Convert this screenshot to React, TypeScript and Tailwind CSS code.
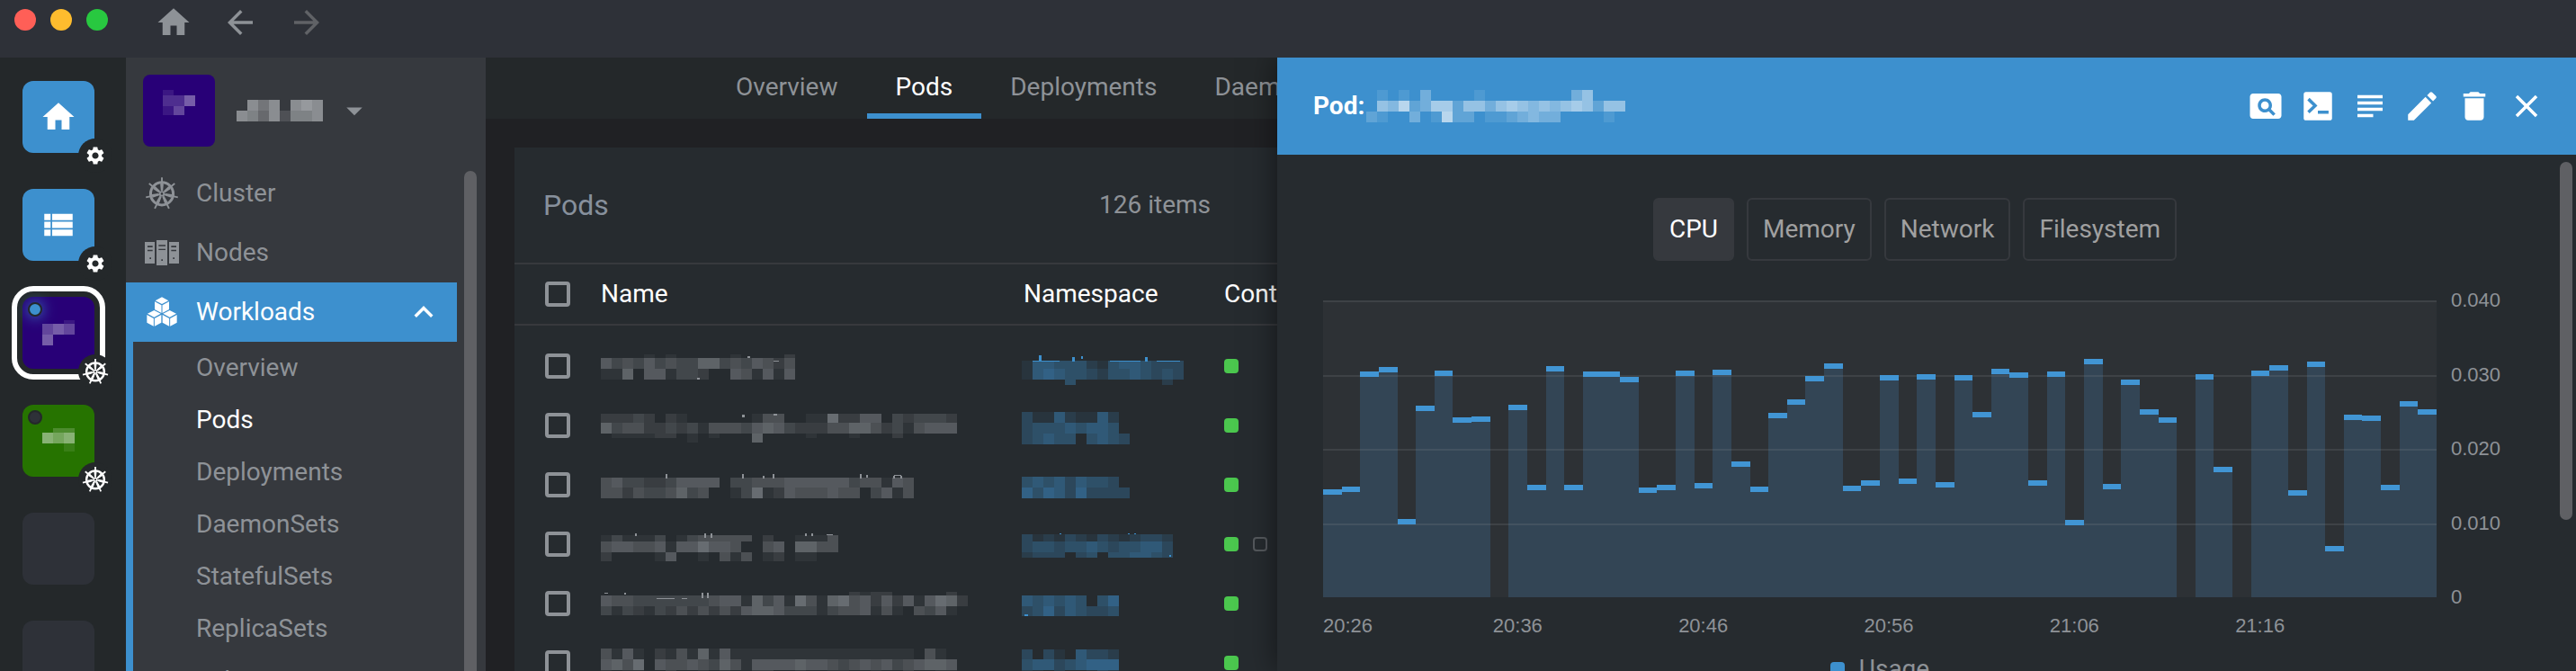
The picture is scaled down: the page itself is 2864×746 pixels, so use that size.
import type { ReactNode } from "react";
import {
  MdArrowBack,
  MdArrowDropDown,
  MdArrowForward,
  MdClose,
  MdDelete,
  MdEdit,
  MdHome,
  MdKeyboardArrowUp,
  MdPageview,
  MdSettings,
  MdSubject,
} from "react-icons/md";

// [top, height, one digit per 12px cell: 0-9 = strength, "." = empty]
type MosaicRow = [number, number, string];
// small strokes that stick out of a masked text: [x, y, width, height]
type Speck = [number, number, number, number];

type Pod = {
  name: MosaicRow[];
  nameSpecks?: Speck[];
  namespace: MosaicRow[];
  namespaceSpecks?: Speck[];
  waiting?: boolean;
};

const pods: Pod[] = [
  {
    name: [
      [20, 4, "....1.1.....1....2"],
      [24, 12, "534353433663435424"],
      [36, 12, "116.551332..541515"],
    ],
    nameSpecks: [[163, 22, 3, 2], [192, 27, 6, 1], [107, 46, 3, 2]],
    namespace: [
      [27, 9, "155444214554333"],
      [36, 12, "156544324454343"],
      [48, 6, "....4........2."],
    ],
    namespaceSpecks: [[19, 21, 3, 7], [56, 23, 3, 5], [66, 22, 2, 3], [137, 23, 3, 5], [12, 27, 30, 1], [98, 27, 34, 1], [150, 27, 26, 1]],
  },
  {
    name: [
      [20, 10, "22232.21......144..1172255.323332"],
      [30, 12, "634422323144435653222446642314555"],
      [42, 5, ".111122.1.1...6....1...1...2....."],
      [47, 5, "........1.....6.................."],
    ],
    nameSpecks: [[157, 21, 3, 3], [192, 20, 4, 2]],
    namespace: [
      [18, 12, "311521152."],
      [30, 12, "344454554."],
      [42, 12, "34544.4543"],
    ],
  },
  {
    name: [
      [25, 11, "45332235555.33444555555344154"],
      [36, 12, "4424334634..137125444544.3514"],
    ],
    nameSpecks: [[72, 21, 2, 5], [157, 21, 2, 5], [180, 23, 2, 3], [191, 21, 2, 5], [288, 21, 2, 5], [295, 22, 2, 3], [326, 22, 8, 1], [325, 23, 2, 3], [333, 23, 2, 3]],
    namespace: [
      [24, 12, "454535443."],
      [36, 12, "6465363333"],
    ],
  },
  {
    name: [
      [23, 7, "131113.1344444.2..1114"],
      [30, 12, "4554451557554..45.6644"],
      [42, 10, "2....15..1.414.12.11.."],
    ],
    nameSpecks: [[38, 21, 2, 3], [115, 21, 2, 5], [122, 21, 2, 5], [227, 21, 2, 3], [234, 21, 2, 3], [251, 22, 7, 1]],
    namespace: [
      [22, 8, "31213213212332"],
      [30, 12, "34434454344553"],
      [42, 6, "2333.34.445543"],
    ],
    namespaceSpecks: [[42, 21, 2, 1], [118, 21, 2, 1], [125, 21, 2, 1], [164, 45, 2, 2]],
    waiting: true,
  },
  {
    name: [
      [20, 4, ".......................2122.....2."],
      [24, 12, "5443333333455163517416745252515762"],
      [36, 10, "3132132424242566533313445141.4351."],
    ],
    nameSpecks: [[4, 21, 4, 1], [26, 21, 2, 2], [62, 27, 20, 1], [90, 27, 6, 1], [112, 21, 2, 6], [118, 21, 2, 6]],
    namespace: [
      [24, 12, "545454.46"],
      [36, 11, "346354334"],
    ],
    namespaceSpecks: [[3, 45, 4, 2]],
  },
  {
    name: [
      [17, 12, "4151.214161511111111111111111.41."],
      [29, 12, "5647.5445436415555655434545345665"],
      [41, 8, "1.11..2..1.1..22..1..11..1..2..11"],
    ],
    namespace: [
      [18, 11, "3.31.5332"],
      [29, 12, "455345666"],
      [41, 8, "21.2..132"],
    ],
  },
];

// CPU usage per minute in millicores, null where no sample came in
const usage: (number | null)[] = [
  14.5, 14.9, 30.4, 31, 10.6, 25.8, 30.6, 24.3, 24.4, null,
  25.9, 15.2, 31.2, 15.2, 30.4, 30.4, 29.7, 14.8, 15.2, 30.5,
  15.4, 30.7, 18.3, 14.9, 24.9, 26.7, 29.8, 31.5, 15, 15.8,
  29.9, 16, 30.1, 15.5, 29.9, 25, 30.8, 30.3, 15.8, 30.4,
  10.4, 32.1, 15.3, 29.3, 25.3, 24.3, null, 30.1, 17.6, null,
  30.5, 31.3, 14.4, 31.8, 6.9, 24.6, 24.5, 15.2, 26.4, 25.3,
];

const yLabels = ["0.040", "0.030", "0.020", "0.010", "0"];
const xLabels = ["20:26", "20:36", "20:46", "20:56", "21:06", "21:16"];

const workloads = [
  "Overview",
  "Pods",
  "Deployments",
  "DaemonSets",
  "StatefulSets",
  "ReplicaSets",
  "Jobs",
];

function Mosaic({ rows, color, height, specks = [], speckColor = "#8e9297" }: {
  rows: MosaicRow[];
  color: string;
  height: number;
  specks?: Speck[];
  speckColor?: string;
}) {
  const width = Math.max(...rows.map((r) => r[2].length)) * 12;
  return (
    <svg width={width} height={height} className="block shrink-0" shapeRendering="crispEdges" aria-hidden="true">
      {rows.map(([y, h, cells]) =>
        cells.split("").map((c, i) =>
          c === "." ? null : (
            <rect key={`${y}-${i}`} x={i * 12} y={y} width={12} height={h} fill={color} opacity={Number(c) / 11} />
          )
        )
      )}
      {specks.map(([x, y, w, h], i) => (
        <rect key={i} x={x} y={y} width={w} height={h} fill={speckColor} />
      ))}
    </svg>
  );
}

function WheelIcon({ className, thin }: { className?: string; thin?: boolean }) {
  const w = thin ? 6 : 5;
  return (
    <svg viewBox="0 0 100 100" className={className} fill="none" stroke="currentColor" aria-hidden="true">
      <circle cx="50" cy="51" r="33" strokeWidth={8} />
      <circle cx="50" cy="51" r="6" strokeWidth={5} />
      {[0, 1, 2, 3, 4, 5, 6].map((i) => (
        <g key={i} transform={`rotate(${(i * 360) / 7} 50 51)`}>
          <path d="M50 42V3" strokeWidth={w} />
          <path d="M47 42L45 22h10l-2 20z" fill="currentColor" stroke="none" />
        </g>
      ))}
    </svg>
  );
}

function NodesIcon() {
  return (
    <svg viewBox="0 0 114 84" className="w-[38px]" fill="currentColor" aria-hidden="true">
      <path d="M0 6h33v72H0zM39 0h36v84H39zM81 6h33v72H81z" />
      <path
        className="fill-[#36393e]"
        d="M9 19h17v5H9zM9 32h17v5H9zM16 58h5v5h-5zM46 16h23v4H46zM46 29h23v4H46zM55 64h5v5h-5zM88 19h17v5H88zM88 32h17v5H88zM94 58h5v5h-5z"
      />
    </svg>
  );
}

function CubesIcon() {
  return (
    <svg viewBox="0 0 102 100" className="w-[34px]" fill="currentColor" aria-hidden="true">
      {[[51, 1], [25, 45], [77, 45]].map(([x, y]) => (
        <path
          key={x}
          transform={`translate(${x} ${y})`}
          d="M0 0l22 11.5L0 23l-22-11.5zM-24 15l22.5 12v26L-24 41zM24 15L1.500 27v26L24 41z"
        />
      ))}
    </svg>
  );
}

function ListIcon() {
  return (
    <svg viewBox="0 0 24 24" className="size-[42px]" fill="currentColor" aria-hidden="true">
      <path d="M3 14h4v-4H3v4zm0 5h4v-4H3v4zM3 9h4V5H3v4zm5 5h13v-4H8v4zm0 5h13v-4H8v4zM8 5v4h13V5H8z" />
    </svg>
  );
}

function TerminalIcon() {
  return (
    <svg viewBox="0 0 24 24" className="size-[42px]" aria-hidden="true">
      <rect x="3" y="3" width="18" height="18" rx="1.500" fill="currentColor" />
      <path d="M6 7.500l4.300 4.200L6 15.900M12 15.900h6.800" fill="none" stroke="#3d90ce" strokeWidth="2" />
    </svg>
  );
}

function HotbarItem({ label, className, badge, status, active, children }: {
  label: string;
  className: string;
  badge?: ReactNode;
  status?: string;
  active?: boolean;
  children?: ReactNode;
}) {
  return (
    <button
      aria-label={label}
      className={`relative flex size-20 shrink-0 items-center justify-center rounded-xl text-white ${className} ${
        active ? "outline-6 outline-offset-6 outline-white" : ""
      }`}
    >
      {children}
      {status && <span className={`absolute top-1.5 left-1.5 size-4 rounded-full border-2 border-[#24282a] ${status}`} />}
      {badge && (
        <span className="absolute -right-5 -bottom-[22px] flex size-[38px] items-center justify-center rounded-full bg-[#24282a]">
          {badge}
        </span>
      )}
    </button>
  );
}

function Hotbar() {
  return (
    <aside className="flex w-[140px] shrink-0 flex-col items-start gap-10 overflow-hidden bg-[#24282a] pt-[26px] pl-[25px]">
      <HotbarItem label="Home" className="bg-[#3d90ce]" badge={<MdSettings className="size-6" />}>
        <MdHome className="size-[42px]" />
      </HotbarItem>
      <HotbarItem label="Catalog" className="bg-[#3d90ce]" badge={<MdSettings className="size-6" />}>
        <ListIcon />
      </HotbarItem>
      <HotbarItem
        label="Current cluster"
        className="bg-[#280077]"
        active
        status="bg-[#3d90ce] shadow-[0_0_16px_#3d90ce]"
        badge={<WheelIcon className="size-[30px]" thin />}
      >
        <Mosaic rows={[[0, 4, "..1"], [4, 12, "343"], [16, 12, "4.."]]} color="#ffffff" height={28} />
      </HotbarItem>
      <HotbarItem
        label="Other cluster"
        className="bg-[#267300]"
        status="bg-[#2e3138]"
        badge={<WheelIcon className="size-[30px]" thin />}
      >
        <Mosaic rows={[[0, 5, ".22"], [5, 12, "545"], [17, 9, "..1"]]} color="#ffffff" height={28} />
      </HotbarItem>
      <HotbarItem label="Empty slot" className="bg-[#2e3138]" />
      <HotbarItem label="Empty slot" className="bg-[#2e3138]" />
    </aside>
  );
}

function Sidebar() {
  const row = "flex h-[66px] items-center gap-[18px] pl-5";
  const icon = "flex w-10 shrink-0 justify-center";

  return (
    <aside className="flex w-[400px] shrink-0 flex-col bg-[#36393e]">
      <button className="flex h-[118px] shrink-0 items-center pl-[19px]" aria-label="Select cluster">
        <span className="mr-6 flex size-20 items-center justify-center rounded-lg bg-[#280077]">
          <Mosaic rows={[[0, 6, "1.."], [6, 12, "224"], [18, 10, "13."]]} color="#ffffff" height={46} />
        </span>
        <Mosaic rows={[[0, 12, ".757.787"], [12, 12, "76472667"], [24, 4, "...11..6"]]} color="#bcbec1" height={24} />
        <MdArrowDropDown className="ml-3.5 size-[42px]" />
      </button>

      <div className="flex min-h-0 flex-1">
        <nav className="flex-1 overflow-hidden">
          <a href="#cluster" className={row}>
            <span className={icon}><WheelIcon className="size-[38px]" /></span>
            Cluster
          </a>
          <a href="#nodes" className={row}>
            <span className={icon}><NodesIcon /></span>
            Nodes
          </a>
          <a href="#workloads" className={`${row} bg-[#3d90ce] text-white`}>
            <span className={icon}><CubesIcon /></span>
            Workloads
            <MdKeyboardArrowUp className="mr-4 ml-auto size-[42px]" />
          </a>
          <ul className="border-l-8 border-[#3d90ce]">
            {workloads.map((item) => (
              <li key={item}>
                <a href={`#${item}`} className={`flex h-[58px] items-center pl-[70px] whitespace-nowrap ${item === "Pods" ? "text-white" : ""}`}>
                  {item}
                </a>
              </li>
            ))}
          </ul>
        </nav>
        <div className="w-8 shrink-0 pt-2 pl-2">
          <div className="h-full w-3.5 rounded-t-full bg-[#5f6064]" />
        </div>
      </div>
    </aside>
  );
}

function PodsTable() {
  const box = "block size-7 appearance-none rounded border-4 border-[#8e9297]";
  const th = "h-[70px] border-y-2 border-[#37393d] p-0 text-left font-normal";

  return (
    <section className="mt-8 ml-8 flex-1 overflow-hidden bg-[#262b2f]">
      <header className="flex h-32 items-center justify-between pr-[74px] pl-8">
        <h1 className="text-[32px] text-[#87909c]">Pods</h1>
        <span>126 items</span>
      </header>
      <table className="w-full table-fixed border-separate border-spacing-0 whitespace-nowrap">
        <thead>
          <tr className="text-white">
            <th className={`${th} w-24 pl-[34px]`}>
              <input type="checkbox" className={box} aria-label="Select all pods" />
            </th>
            <th className={`${th} w-[468px]`}>Name</th>
            <th className={`${th} w-[225px] pl-0.5`}>Namespace</th>
            <th className={th}>Containers</th>
          </tr>
        </thead>
        <tbody className="before:block before:h-3">
          {pods.map((pod, i) => (
            <tr key={i}>
              <td className="h-[66px] p-0 pl-[34px]">
                <input type="checkbox" className={box} aria-label={`Select pod ${i + 1}`} />
              </td>
              <td className="p-0">
                <Mosaic rows={pod.name} specks={pod.nameSpecks} color="#8e9297" height={66} />
              </td>
              <td className="p-0">
                <Mosaic rows={pod.namespace} specks={pod.namespaceSpecks} color="#3d90ce" speckColor="#3d90ce" height={66} />
              </td>
              <td className="p-0">
                <div className="flex gap-4">
                  <span className="size-4 shrink-0 rounded bg-[#4bc74e]" />
                  {pod.waiting && <span className="size-4 shrink-0 rounded border-2 border-[#55595d]" />}
                </div>
              </td>
            </tr>
          ))}
        </tbody>
      </table>
    </section>
  );
}

function CpuChart() {
  const barWidth = 1238 / usage.length;
  const toY = (m: number) => 330 - (m / 40) * 330;

  return (
    <div className="mt-11 flex font-['Liberation_Sans',sans-serif] text-[22px] leading-[22px]">
      <div className="min-w-0 flex-1">
        <svg viewBox="0 0 1238 330" preserveAspectRatio="none" className="block h-[330px] w-full" role="img" aria-label="CPU usage">
          <rect width="1238" height="330" fill="#2d3135" />
          {usage.map((m, i) =>
            m === null ? null : (
              <rect key={i} x={i * barWidth} y={toY(m)} width={barWidth} height={330 - toY(m)} fill="#334555" shapeRendering="crispEdges" />
            )
          )}
          {[0, 83, 165, 248].map((y) => (
            <rect key={y} y={y} width="1238" height="2" fill="#8e9297" opacity="0.180" />
          ))}
          {usage.map((m, i) =>
            m === null ? null : (
              <rect key={i} x={i * barWidth} y={toY(m)} width={barWidth} height="6" fill="#4195d4" shapeRendering="crispEdges" />
            )
          )}
        </svg>
        <div className="mt-[21px] grid grid-cols-6">
          {xLabels.map((label) => (
            <span key={label} className="flex w-5 justify-center first:justify-start">{label}</span>
          ))}
        </div>
        <div className="mt-[23px] flex items-center justify-center gap-4 font-[Roboto,sans-serif] text-[28px] leading-[28px]">
          <span className="size-4 rounded-sm bg-[#3d90ce]" />
          Usage
        </div>
      </div>
      <div className="-mt-[11px] ml-4 flex h-[352px] w-[62px] flex-col justify-between">
        {yLabels.map((label) => (
          <span key={label}>{label}</span>
        ))}
      </div>
    </div>
  );
}

function PodDrawer() {
  const actions = [
    { label: "Attach to pod", icon: <MdPageview className="size-[42px]" /> },
    { label: "Shell", icon: <TerminalIcon /> },
    { label: "Logs", icon: <MdSubject className="size-[42px]" /> },
    { label: "Edit", icon: <MdEdit className="size-[42px]" /> },
    { label: "Delete", icon: <MdDelete className="size-[42px]" /> },
    { label: "Close", icon: <MdClose className="size-[42px]" /> },
  ];

  return (
    <section className="relative z-10 flex w-[1444px] shrink-0 flex-col bg-[#262b2f] shadow-[0_0_32px_rgba(0,0,0,0.5)]">
      <header className="flex h-[108px] shrink-0 items-center justify-between bg-[#3d90ce] pr-[34px] pl-10 text-white">
        <h2 className="flex items-center gap-0.5 font-bold">
          Pod:
          <Mosaic
            rows={[
              [0, 12, ".1.1.3....1........35..."],
              [12, 12, ".54723662553565454565255"],
              [24, 12, "21..3.1722.1123433....1."],
            ]}
            color="#ffffff"
            height={36}
          />
        </h2>
        <div className="flex gap-4">
          {actions.map((a) => (
            <button key={a.label} aria-label={a.label}>{a.icon}</button>
          ))}
        </div>
      </header>

      <div className="flex min-h-0 flex-1 overflow-hidden">
        <div className="min-w-0 flex-1 pt-12 pr-[59px] pl-[51px]">
          <div className="flex justify-center gap-3.5 text-[#a0a0a0]">
            {["CPU", "Memory", "Network", "Filesystem"].map((name) => (
              <button
                key={name}
                className={`h-[70px] rounded-md border-2 border-[#36393e] px-4 ${name === "CPU" ? "bg-[#36393e] text-white" : ""}`}
              >
                {name}
              </button>
            ))}
          </div>
          <CpuChart />
        </div>
        <div className="w-[18px] shrink-0 pt-2">
          <div className="h-[398px] w-3.5 rounded-full bg-[#5f6064]" />
        </div>
      </div>
    </section>
  );
}

export default function App() {
  return (
    <div className="flex h-screen flex-col overflow-hidden bg-[#202124] font-[Roboto,sans-serif] text-[28px] text-[#8e9297]">
      <header className="flex h-16 shrink-0 items-start bg-[#2e3138] pl-4">
        <div className="flex gap-4 pt-2.5">
          <span className="size-6 rounded-full bg-[#ff5f57]" />
          <span className="size-6 rounded-full bg-[#febc2e]" />
          <span className="size-6 rounded-full bg-[#28c840]" />
        </div>
        <div className="ml-[52px] flex gap-8 pt-1">
          <button aria-label="Home"><MdHome className="size-[42px]" /></button>
          <button aria-label="Back"><MdArrowBack className="size-[42px]" /></button>
          <button aria-label="Forward" disabled className="text-[#606266]"><MdArrowForward className="size-[42px]" /></button>
        </div>
      </header>

      <div className="flex min-h-0 flex-1 overflow-hidden">
        <Hotbar />
        <Sidebar />
        <main className="flex min-w-0 flex-1 flex-col overflow-hidden">
          <nav className="flex h-[68px] shrink-0 overflow-hidden bg-[#24282a] pl-[246px]">
            {workloads.slice(0, 4).map((tab) => (
              <a
                key={tab}
                href={`#${tab}`}
                className={`flex shrink-0 items-center border-b-6 px-8 pt-1 ${
                  tab === "Pods" ? "border-[#3d90ce] text-white" : "border-transparent"
                }`}
              >
                {tab}
              </a>
            ))}
          </nav>
          <PodsTable />
        </main>
        <PodDrawer />
      </div>
    </div>
  );
}
